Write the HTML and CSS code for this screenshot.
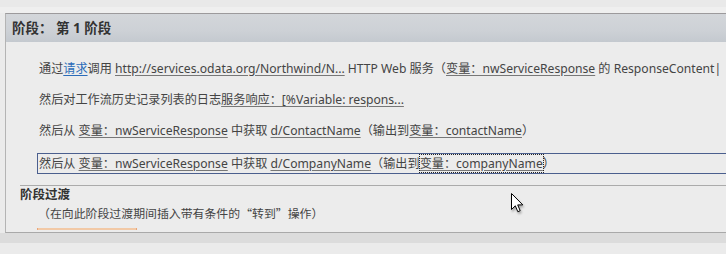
FILE: index.html
```html
<!DOCTYPE html>
<html lang="zh-CN">
<head>
    <meta charset="UTF-8">
    <title>阶段</title>
    <link rel="stylesheet" href="styles.css">
</head>
<body>
    <div class="stage">
        <div class="stage-header">阶段： 第 1 阶段</div>
        <div class="steps">
            <div class="step">通过<a class="link blue" href="#">请求</a>调用 <a class="link" href="#">http://services.odata.org/Northwind/N...</a> HTTP Web 服务（<a class="link" href="#">变量：nwServiceResponse</a> 的 ResponseContent|</div>
            <div class="step">然后对工作流历史记录列表的日志<a class="link" href="#">服务响应：[%Variable: respons...</a></div>
            <div class="step">然后从 <a class="link" href="#">变量：nwServiceResponse</a> 中获取 <a class="link" href="#">d/ContactName</a>（输出到<a class="link" href="#">变量：contactName</a>）</div>
            <div class="step selected">然后从 <a class="link" href="#">变量：nwServiceResponse</a> 中获取 <a class="link" href="#">d/CompanyName</a>（输出到<a class="link focus" href="#">变量：companyName</a>）</div>
        </div>
        <div class="transition">
            <div class="transition-title">阶段过渡</div>
            <div class="transition-hint">（在向此阶段过渡期间插入带有条件的“转到”操作）</div>
            <div class="drop-line"></div>
        </div>
    </div>
    <div class="footer-band"></div>

    <svg class="cursor" width="13" height="21" viewBox="0 0 13 21">
        <path d="M0.5 0.5 L0.5 16.5 L4.3 12.8 L6.8 18.7 L9.2 17.7 L6.7 11.9 L11.8 11.9 Z" fill="#fff" stroke="#000" stroke-width="1"/>
    </svg>
</body>
</html>
```

FILE: styles.css
```css
* {
    margin: 0;
    padding: 0;
    box-sizing: border-box;
}

body {
    background-color: #ebebeb;
    background-image: linear-gradient(to bottom, #e9e9e9 0, #e9e9e9 7px, #efefef 7px, #efefef 13px, transparent 13px);
    padding-top: 13px;
    color: #444;
    font-family: "Noto Sans", "Noto Sans CJK TC", sans-serif;
    font-size: 12.15px;
    overflow: hidden;
    position: relative;
    height: 254px;
}

.stage {
    margin-left: 5px;
    border-top: 1px solid #9c9a9c;
    border-left: 1px solid #b4b4b4;
    border-bottom: 1px solid #a9a9a9;
    background-color: #ececec;
    height: 220px;
    overflow: hidden;
}

.stage-header {
    height: 28px;
    line-height: 28px;
    padding-left: 6px;
    background-image: linear-gradient(to bottom, #d3d6da, #cdd1d6 60%, #c4c9cf);
    font-weight: bold;
    font-size: 13.5px;
    color: #333;
}

.steps {
    padding-top: 11px;
    padding-left: 31px;
}

.step {
    height: 31px;
    line-height: 31px;
    white-space: nowrap;
    padding-left: 2px;
}

.step.selected {
    height: 21px;
    line-height: 19px;
    margin-top: 7px;
    margin-right: -20px;
    border: 1px solid #4b5f8e;
    padding-left: 1px;
}

.link {
    color: #444;
    text-decoration: underline;
    text-decoration-color: #777;
    text-underline-offset: 2px;
}

.link.blue {
    color: #2c6cb9;
    text-decoration-color: #2c6cb9;
}

.link.focus {
    display: inline-block;
    line-height: 17px;
    outline: 1px dotted #222;
    vertical-align: top;
    margin-top: 1px;
}

.transition {
    margin-top: 11px;
    margin-left: 14px;
    border-top: 1px solid #ababab;
}

.transition-title {
    font-weight: bold;
    font-size: 12.5px;
    color: #333;
    height: 17px;
    line-height: 17px;
}

.transition-hint {
    padding-left: 18px;
    height: 20px;
    line-height: 20px;
    font-family: "Noto Sans CJK TC", sans-serif;
    font-size: 11.9px;
}

.drop-line {
    margin-top: 5px;
    margin-left: 17px;
    width: 100px;
    height: 2px;
    background-color: #f2c9a6;
    border-left: 1px solid #e9a57a;
    border-right: 1px solid #e9a57a;
}

.footer-band {
    height: 10px;
    background-color: #dcdcdc;
}

.cursor {
    position: absolute;
    left: 511px;
    top: 193px;
    filter: drop-shadow(1px 2px 1px rgba(0, 0, 0, 0.3));
}
```
